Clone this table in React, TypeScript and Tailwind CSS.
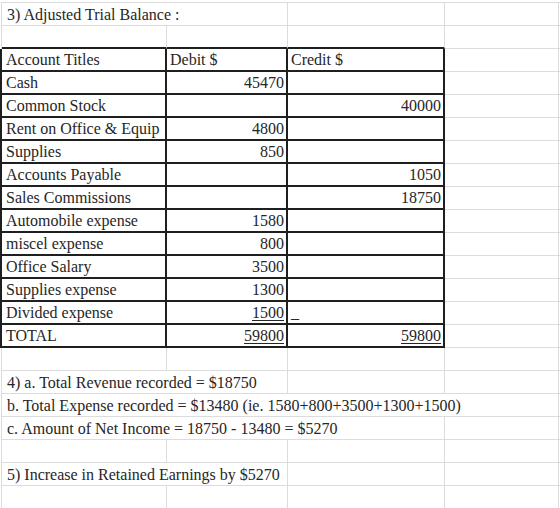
import React from "react";

type Cell = {
  text?: string;
  span?: number; // number of columns the text runs across
};

// column widths incl. the gridline on the right
const COLS = [165, 121, 157, 114];

const widthOf = (start: number, span: number) =>
  COLS.slice(start, start + span).reduce((a, b) => a + b, 0);

const TABLE: [string, string, string][] = [
  ["Account Titles", "Debit $", "Credit $"],
  ["Cash", "45470", ""],
  ["Common Stock", "", "40000"],
  ["Rent on Office & Equip", "4800", ""],
  ["Supplies", "850", ""],
  ["Accounts Payable", "", "1050"],
  ["Sales Commissions", "", "18750"],
  ["Automobile expense", "1580", ""],
  ["miscel expense", "800", ""],
  ["Office Salary", "3500", ""],
  ["Supplies expense", "1300", ""],
  ["Divided expense", "1500", "_"],
  ["TOTAL", "59800", "59800"],
];

const SheetRow = ({ cells, tableTop = false }: { cells: Cell[]; tableTop?: boolean }) => {
  let col = 0;
  return (
    <div className="flex h-[23px] border-l border-[#dcdcdc]">
      {cells.map((c, i) => {
        const span = c.span ?? 1;
        const w = widthOf(col, span);
        const start = col;
        col += span;
        const dark = tableTop && start < 3;
        return (
          <div
            key={i}
            style={{ width: w }}
            className={
              "flex shrink-0 items-center whitespace-nowrap border-r border-[#dcdcdc] pl-[5px] pt-px " +
              (dark ? "border-b-2 border-b-[#1f1f1f]" : "border-b")
            }
          >
            {c.text}
          </div>
        );
      })}
      <div className="flex-1 border-b border-[#dcdcdc]" />
    </div>
  );
};

const TableRow = ({ row, total }: { row: [string, string, string]; total: boolean }) => {
  const [title, debit, credit] = row;
  const header = title === "Account Titles";
  const underlineDebit = debit === "1500" || total;
  const leftCredit = header || credit === "_";
  return (
    <div className="-ml-px flex h-[23px] border-l-2 border-[#1f1f1f]">
      <div className="flex w-[165px] shrink-0 items-center whitespace-nowrap border-r-2 border-b-2 border-[#1f1f1f] bg-white pl-[4px] pt-px">
        {title}
      </div>
      <div
        className={
          "flex w-[121px] shrink-0 items-center whitespace-nowrap border-r-2 border-b-2 border-[#1f1f1f] bg-white pt-px " +
          (header ? "pl-[3px]" : "justify-end pr-[2px]")
        }
      >
        <span className={underlineDebit ? "underline underline-offset-2" : ""}>{debit}</span>
      </div>
      <div
        className={
          "flex w-[157px] shrink-0 items-center whitespace-nowrap border-r-2 border-b-2 border-[#1f1f1f] bg-white pt-px " +
          (leftCredit ? "pl-[3px]" : "justify-end pr-[2px]")
        }
      >
        <span className={total ? "underline underline-offset-2" : ""}>{credit}</span>
      </div>
      <div className="w-[114px] shrink-0 border-r border-b border-[#dcdcdc]" />
      <div className="flex-1 border-b border-[#dcdcdc]" />
    </div>
  );
};

export default function App() {
  return (
    <div className="h-[508px] w-[560px] overflow-hidden bg-white pl-px pt-[2px] font-['Liberation_Serif','Times_New_Roman',serif] text-[16px] leading-[20px] text-[#262626]">
      <div className="border-t border-[#dcdcdc]">
        <SheetRow cells={[{ text: "3) Adjusted Trial Balance :", span: 2 }, {}, {}]} />
        <SheetRow cells={[{}, {}, {}, {}]} tableTop />
        {TABLE.map((r, i) => (
          <TableRow key={i} row={r} total={i === TABLE.length - 1} />
        ))}
        <SheetRow cells={[{}, {}, {}, {}]} />
        <SheetRow cells={[{ text: "4) a. Total Revenue recorded = $18750", span: 2 }, {}, {}]} />
        <SheetRow cells={[{ text: "b. Total Expense recorded = $13480 (ie. 1580+800+3500+1300+1500)", span: 4 }]} />
        <SheetRow cells={[{ text: "c. Amount of Net Income = 18750 - 13480 = $5270", span: 3 }, {}]} />
        <SheetRow cells={[{}, {}, {}, {}]} />
        <SheetRow cells={[{ text: "5) Increase in Retained Earnings by $5270", span: 2 }, {}, {}]} />
        <SheetRow cells={[{}, {}, {}, {}]} />
      </div>
    </div>
  );
}
